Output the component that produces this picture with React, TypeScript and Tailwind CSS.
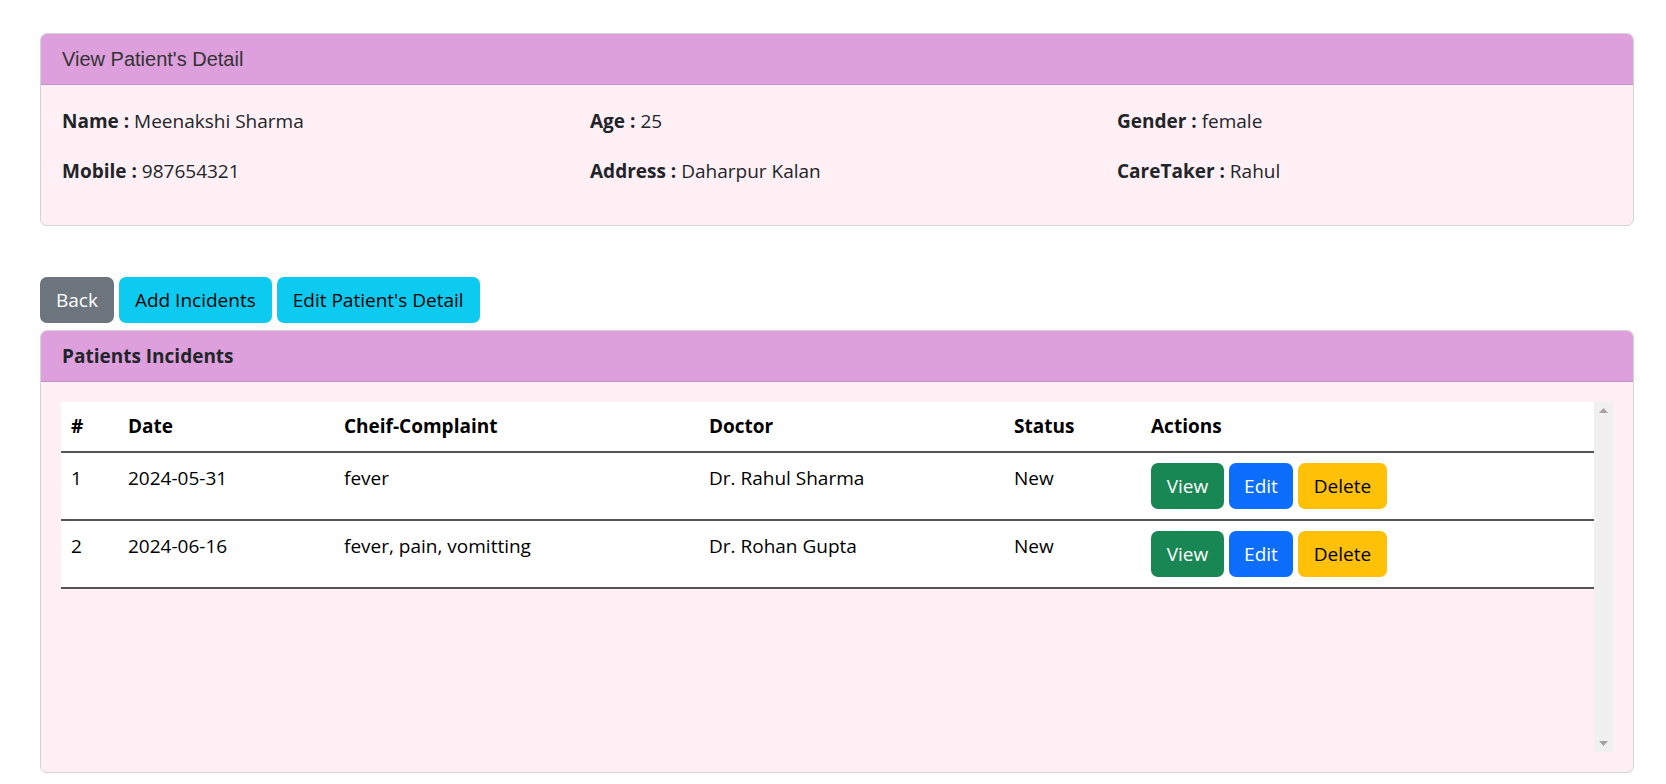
import React from 'react'

const incidents = [
  { id: 1, date: '2024-05-31', complaint: 'fever', doctor: 'Dr. Rahul Sharma', status: 'New' },
  { id: 2, date: '2024-06-16', complaint: 'fever, pain, vomitting', doctor: 'Dr. Rohan Gupta', status: 'New' },
]

const Field = ({ label, value }: { label: string; value: string }) => (
  <p className="h-[30px] leading-[30px]">
    <span className="font-bold">{label} :</span> {value}
  </p>
)

const App = () => {
  return (
    <div className="min-h-[784px] bg-white pl-[40px] pr-[32px] pt-[33px] text-[#212529] text-[19px]" style={{ fontFamily: '"Open Sans", "Noto Sans", sans-serif' }}>
      {/* patient detail card */}
      <div className="rounded-[7px] border border-[#d3d3d3] overflow-hidden bg-[#fff0f5]">
        <div className="h-[51px] bg-[#dda0dd] border-b border-[#c590c5] px-[21px] flex items-center text-[20px] text-[#333]" style={{ fontFamily: '"Liberation Sans", Arial, sans-serif' }}>
          View Patient's Detail
        </div>
        <div className="grid grid-cols-[528px_527px_1fr] gap-y-[20px] px-[21px] pt-[21px] pb-[39px]">
          <Field label="Name" value="Meenakshi Sharma" />
          <Field label="Age" value="25" />
          <Field label="Gender" value="female" />
          <Field label="Mobile" value="987654321" />
          <Field label="Address" value="Daharpur Kalan" />
          <Field label="CareTaker" value="Rahul" />
        </div>
      </div>

      {/* buttons */}
      <div className="mt-[51px] flex gap-[5px]">
        <button className="h-[46px] px-[16px] rounded-[7px] bg-[#6c757d] text-white">Back</button>
        <button className="h-[46px] px-[16px] rounded-[7px] bg-[#0dcaf0] text-black">Add Incidents</button>
        <button className="h-[46px] px-[16px] rounded-[7px] bg-[#0dcaf0] text-black">Edit Patient's Detail</button>
      </div>

      {/* incidents card */}
      <div className="mt-[7px] rounded-[7px] border border-[#d3d3d3] overflow-hidden bg-[#fff0f5]">
        <div className="h-[51px] bg-[#dda0dd] border-b border-[#c590c5] px-[21px] flex items-center font-bold text-[#212529]">
          Patients Incidents
        </div>
        <div className="p-[20px]">
          <div className="h-[350px] flex">
            <div className="flex-1">
              <table className="w-full table-fixed bg-white text-black text-left">
                <thead>
                  <tr className="h-[50px] border-b-2 border-[#555]">
                    <th className="w-[57px] px-[10px] font-bold">#</th>
                    <th className="w-[216px] px-[10px] font-bold">Date</th>
                    <th className="w-[365px] px-[10px] font-bold">Cheif-Complaint</th>
                    <th className="w-[305px] px-[10px] font-bold">Doctor</th>
                    <th className="w-[137px] px-[10px] font-bold">Status</th>
                    <th className="px-[10px] font-bold">Actions</th>
                  </tr>
                </thead>
                <tbody>
                  {incidents.map((row) => (
                    <tr key={row.id} className="border-b-2 border-[#555] align-top">
                      <td className="px-[10px] py-[10px] leading-[30px]">{row.id}</td>
                      <td className="px-[10px] py-[10px] leading-[30px]">{row.date}</td>
                      <td className="px-[10px] py-[10px] leading-[30px]">{row.complaint}</td>
                      <td className="px-[10px] py-[10px] leading-[30px]">{row.doctor}</td>
                      <td className="px-[10px] py-[10px] leading-[30px]">{row.status}</td>
                      <td className="px-[10px] py-[10px]">
                        <div className="flex gap-[5px]">
                          <button className="h-[46px] w-[73px] rounded-[7px] bg-[#198754] text-white">View</button>
                          <button className="h-[46px] w-[64px] rounded-[7px] bg-[#0d6efd] text-white">Edit</button>
                          <button className="h-[46px] w-[89px] rounded-[7px] bg-[#ffc107] text-black">Delete</button>
                        </div>
                      </td>
                    </tr>
                  ))}
                </tbody>
              </table>
            </div>
            {/* scrollbar track */}
            <div className="w-[19px] bg-[#f0f0f0] flex flex-col items-center justify-between py-[6px]">
              <svg width="9" height="5" viewBox="0 0 9 5"><path d="M0 5 L4.5 0 L9 5 Z" fill="#a3a3a3" /></svg>
              <svg width="9" height="5" viewBox="0 0 9 5"><path d="M0 0 L4.5 5 L9 0 Z" fill="#a3a3a3" /></svg>
            </div>
          </div>
        </div>
      </div>
    </div>
  )
}

export default App
